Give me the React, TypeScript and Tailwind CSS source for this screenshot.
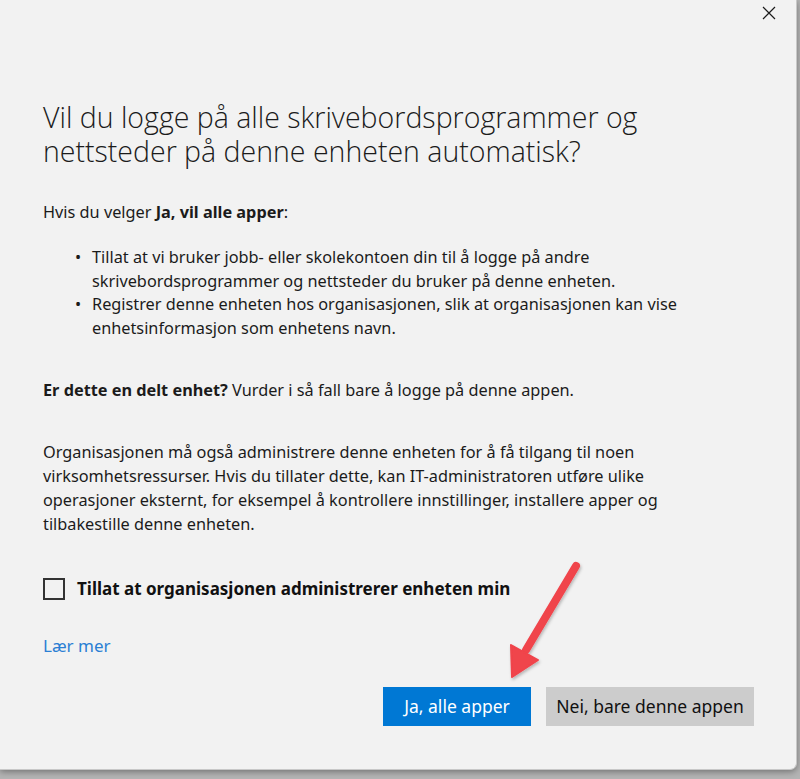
import React from "react";

export default function App() {
  const body = { fontFamily: '"Noto Sans", "Open Sans", sans-serif' };
  return (
    <div className="w-[800px] h-[779px] bg-[#b4b4b4] overflow-hidden relative" style={body}>
      <div className="relative w-[797px] h-[770px] bg-[#f2f2f2] rounded-br-[7px] border-r border-b border-[#c8c8c8] shadow-[0_2px_6px_rgba(0,0,0,0.35)] flex flex-col text-[#1b1b1b]">
        <div className="flex justify-end pt-[6px] pr-[20px] h-[24px]">
          <svg width="14" height="14" viewBox="0 0 14 14">
            <path d="M1 1 L13 13 M13 1 L1 13" stroke="#1b1b1b" strokeWidth="1.2" fill="none" />
          </svg>
        </div>
        <div className="pl-[43px] pr-[42px] flex flex-col">
          <h1
            className="mt-[76px] text-[28.5px] leading-[34px] font-light text-[#1b1b1b] whitespace-nowrap"
            style={{ fontFamily: '"Open Sans", "Noto Sans", sans-serif' }}
          >
            Vil du logge på alle skrivebordsprogrammer og
            <br />
            nettsteder på denne enheten automatisk?
          </h1>
          <p className="mt-[32px] text-[16.3px] leading-[24px]">
            Hvis du velger <b className="font-bold">Ja, vil alle apper</b>:
          </p>
          <ul className="mt-[22px] text-[16.3px] leading-[23.5px] whitespace-nowrap">
            <li className="flex">
              <span className="w-[49px] pl-[32px] shrink-0">•</span>
              <span>
                Tillat at vi bruker jobb- eller skolekontoen din til å logge på andre
                <br />
                skrivebordsprogrammer og nettsteder du bruker på denne enheten.
              </span>
            </li>
            <li className="flex">
              <span className="w-[49px] pl-[32px] shrink-0">•</span>
              <span>
                Registrer denne enheten hos organisasjonen, slik at organisasjonen kan vise
                <br />
                enhetsinformasjon som enhetens navn.
              </span>
            </li>
          </ul>
          <p className="mt-[38px] text-[16.3px] leading-[24px] whitespace-nowrap">
            <b className="font-bold">Er dette en delt enhet?</b> Vurder i så fall bare å logge på denne appen.
          </p>
          <p className="mt-[38px] text-[16.3px] leading-[24px] whitespace-nowrap">
            Organisasjonen må også administrere denne enheten for å få tilgang til noen
            <br />
            virksomhetsressurser. Hvis du tillater dette, kan IT-administratoren utføre ulike
            <br />
            operasjoner eksternt, for eksempel å kontrollere innstillinger, installere apper og
            <br />
            tilbakestille denne enheten.
          </p>
          <div className="mt-[41px] flex items-center h-[24px]">
            <div className="w-[22px] h-[22px] border-2 border-[#333333] bg-[#f2f2f2] shrink-0" />
            <span className="ml-[12px] text-[17px] font-bold text-[#111] whitespace-nowrap">
              Tillat at organisasjonen administrerer enheten min
            </span>
          </div>
          <div className="mt-[33px] h-[24px] leading-[24px] text-[17px] text-[#2a7fd4]">Lær mer</div>
          <div className="mt-[29px] flex justify-end gap-[15px]">
            <div className="w-[148px] h-[39px] bg-[#0078d4] text-white text-[17.5px] flex items-center justify-center">
              Ja, alle apper
            </div>
            <div className="w-[208px] h-[39px] bg-[#cccccc] text-[#111] text-[17.5px] flex items-center justify-center">
              Nei, bare denne appen
            </div>
          </div>
        </div>
      </div>
      <svg className="absolute left-0 top-0 pointer-events-none" width="800" height="779" viewBox="0 0 800 779">
        <defs>
          <filter id="sh" x="-20%" y="-20%" width="140%" height="140%">
            <feDropShadow dx="1" dy="2" stdDeviation="1.5" floodColor="#000" floodOpacity="0.25" />
          </filter>
        </defs>
        <g filter="url(#sh)">
          <line x1="576" y1="566" x2="526" y2="650" stroke="#f0444b" strokeWidth="8" strokeLinecap="round" />
          <polygon points="512,677 511,645 538,660" fill="#f0444b" stroke="#f0444b" strokeWidth="2" strokeLinejoin="round" />
        </g>
      </svg>
    </div>
  );
}
